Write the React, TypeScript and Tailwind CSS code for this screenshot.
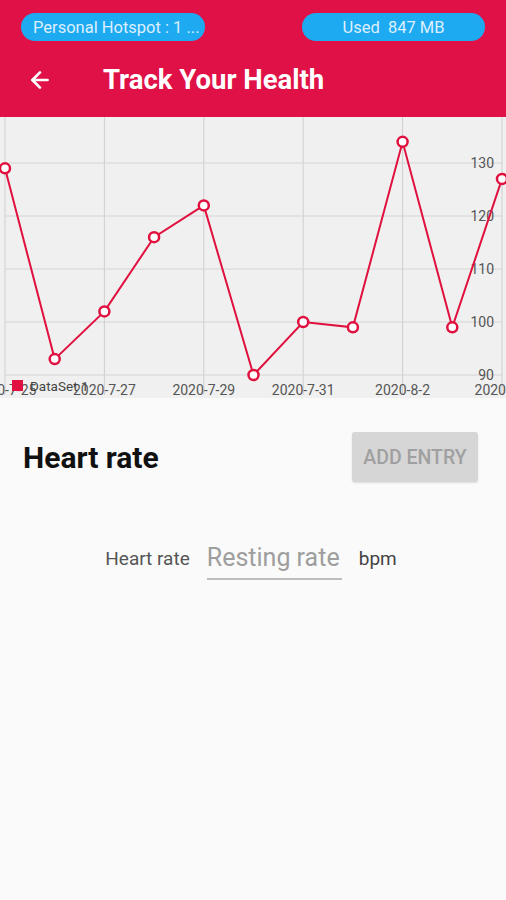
import { ArrowLeft } from "lucide-react";

const xs = [5, 54.7, 104.4, 154.1, 203.8, 253.5, 303.2, 352.9, 402.6, 452.3, 502];
const vals = [129, 93, 102, 116, 122, 90, 100, 99, 134, 99, 127];
const yOf = (v: number) => 258 - (v - 90) * 5.3;

const xLabels = [
  { x: 5, t: "2020-7-25" },
  { x: 104.4, t: "2020-7-27" },
  { x: 203.8, t: "2020-7-29" },
  { x: 303.2, t: "2020-7-31" },
  { x: 402.6, t: "2020-8-2" },
  { x: 502, t: "2020-8-4" },
];

function Chart() {
  const pts = xs.map((x, i) => `${x},${yOf(vals[i])}`).join(" ");
  return (
    <div className="h-[281px] w-full overflow-hidden bg-[#f0f0f0]">
      <svg width="506" height="281" viewBox="0 0 506 281" style={{ fontFamily: "Roboto, sans-serif" }}>
        {xs
          .filter((_, i) => i % 2 === 0)
          .map((x) => (
            <line key={x} x1={x} y1={0} x2={x} y2={278} stroke="#cfcfcf" strokeWidth="1" />
          ))}
        {[90, 100, 110, 120, 130].map((v) => (
          <line key={v} x1={5} y1={yOf(v)} x2={502} y2={yOf(v)} stroke="#d4d4d4" strokeWidth="1" />
        ))}
        {[90, 100, 110, 120, 130].map((v) => (
          <text key={v} x={494} y={yOf(v) + 5} textAnchor="end" fontSize="14" fill="#555">
            {v}
          </text>
        ))}
        {xLabels.map((l) => (
          <text key={l.t} x={l.x} y={278} textAnchor="middle" fontSize="14" fill="#555">
            {l.t}
          </text>
        ))}
        <polyline points={pts} fill="none" stroke="#e0103f" strokeWidth="2" />
        {xs.map((x, i) => (
          <circle key={x} cx={x} cy={yOf(vals[i])} r="5" fill="#fff" stroke="#e0103f" strokeWidth="2.5" />
        ))}
        <rect x={12} y={263} width={11} height={11} fill="#e0103f" />
        <text x={30} y={274} fontSize="13.5" fill="#444">
          DataSet 1
        </text>
      </svg>
    </div>
  );
}

export default function App() {
  return (
    <div className="min-h-[900px] w-[506px] bg-[#fafafa] font-['Roboto',sans-serif]">
      <div className="h-[117px] bg-[#e01147] flex flex-col">
        <div className="flex items-center justify-between px-[21px] pt-[13px]">
          <div className="w-[184px] h-[28px] rounded-full bg-[#1eaaf1] text-[#dcefff] text-[16.5px] flex items-center pl-[12px] pt-[2px] whitespace-nowrap overflow-hidden">
            Personal Hotspot : 1 ...
          </div>
          <div className="w-[183px] h-[28px] rounded-full bg-[#1eaaf1] text-[#dcefff] text-[16.5px] flex items-center justify-center pt-[2px] whitespace-nowrap">
            Used&nbsp; 847 MB
          </div>
        </div>
        <div className="flex items-center mt-[25px] pl-[27px]">
          <ArrowLeft size={26} color="#fff" strokeWidth={2.5} />
          <h1 className="ml-[50px] text-white text-[27.5px] font-bold leading-none">Track Your Health</h1>
        </div>
      </div>
      <Chart />
      <div className="flex items-center justify-between pl-[23px] pr-[28px] mt-[34px]">
        <div className="text-[30px] font-bold text-[#111]">Heart rate</div>
        <div className="w-[126px] h-[50px] rounded-[3px] bg-[#d6d6d6] text-[#a0a0a0] text-[19.5px] font-medium flex items-center justify-center pt-[2px] shadow-[0_1px_2px_rgba(0,0,0,0.12)]">
          ADD ENTRY
        </div>
      </div>
      <div className="flex items-center justify-center mt-[57px] pr-[4px]">
        <span className="text-[19px] text-[#555]">Heart rate</span>
        <div className="ml-[17px] w-[135px] border-b-2 border-[#bdbdbd] pb-[1px]">
          <span className="text-[25px] text-[#9e9e9e] whitespace-nowrap">Resting rate</span>
        </div>
        <span className="ml-[17px] text-[19px] text-[#444]">bpm</span>
      </div>
    </div>
  );
}
